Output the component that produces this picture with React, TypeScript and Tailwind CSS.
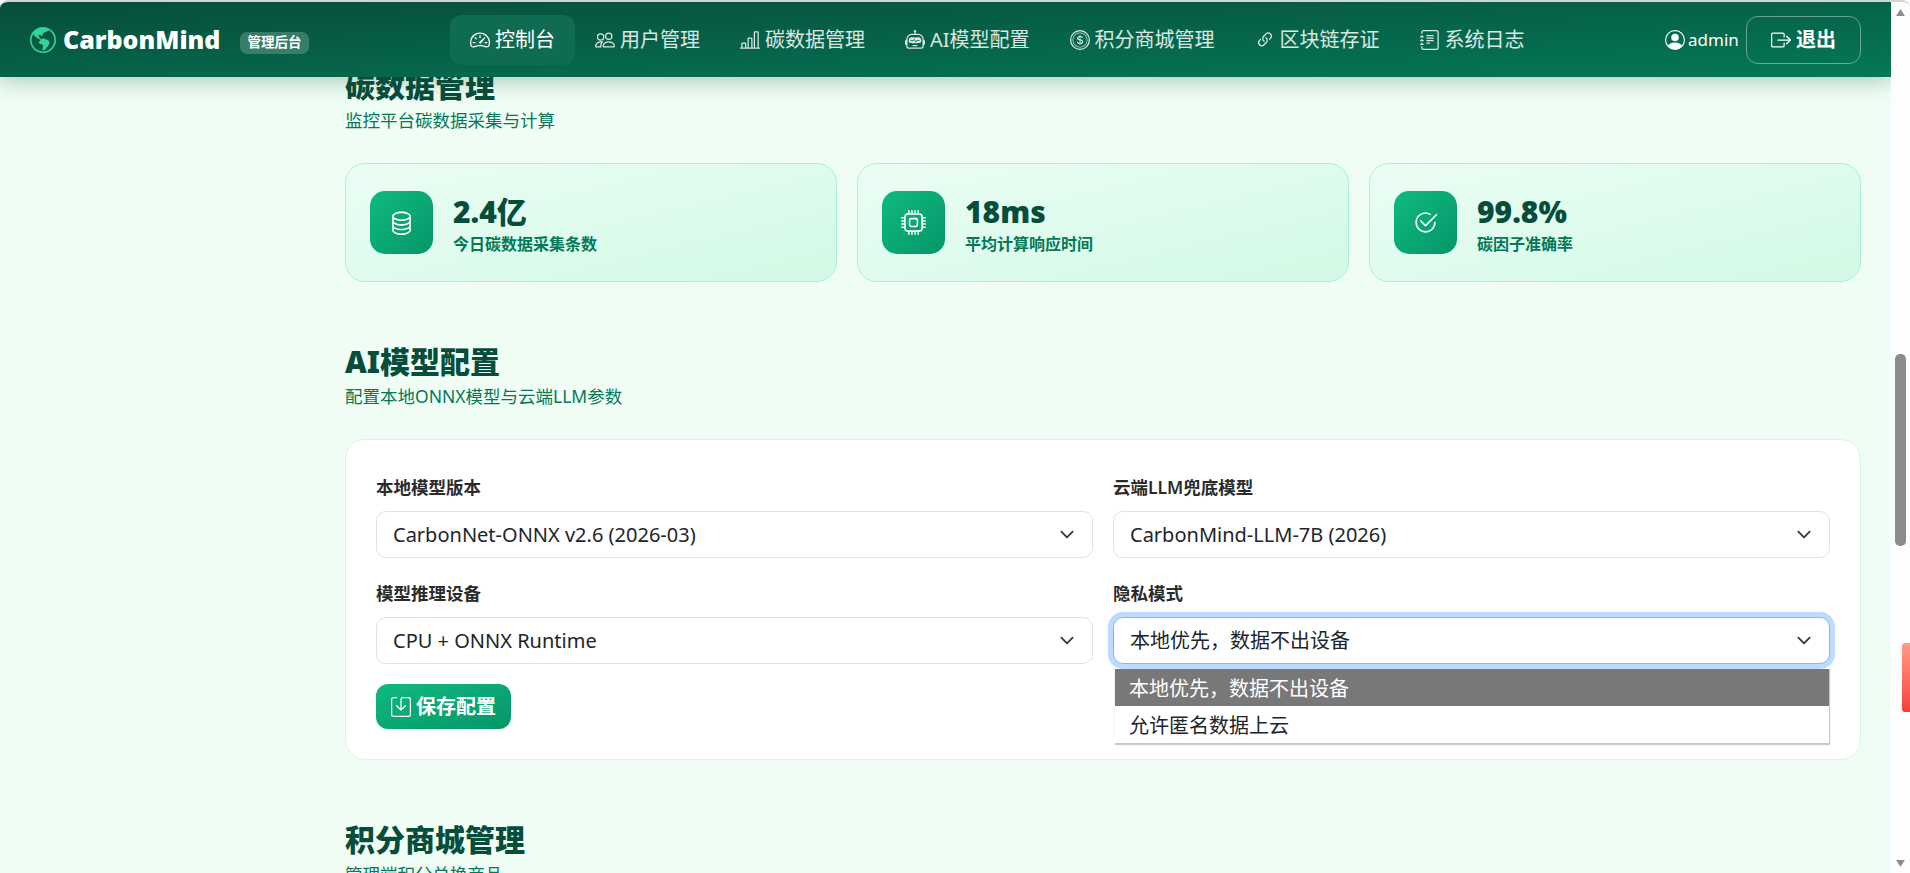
import {
  BsBarChartLine,
  BsBoxArrowRight,
  BsCheck2Circle,
  BsCoin,
  BsCpu,
  BsDatabase,
  BsGlobeAmericas,
  BsJournalText,
  BsLink45Deg,
  BsPeople,
  BsPersonCircle,
  BsRobot,
  BsSave,
  BsSpeedometer2,
} from "react-icons/bs";
import type { IconType } from "react-icons";

const navItems: Array<{ label: string; icon: IconType; active?: boolean }> = [
  { label: "控制台", icon: BsSpeedometer2, active: true },
  { label: "用户管理", icon: BsPeople },
  { label: "碳数据管理", icon: BsBarChartLine },
  { label: "AI模型配置", icon: BsRobot },
  { label: "积分商城管理", icon: BsCoin },
  { label: "区块链存证", icon: BsLink45Deg },
  { label: "系统日志", icon: BsJournalText },
];

const stats: Array<{ value: string; label: string; icon: IconType }> = [
  { value: "2.4亿", label: "今日碳数据采集条数", icon: BsDatabase },
  { value: "18ms", label: "平均计算响应时间", icon: BsCpu },
  { value: "99.8%", label: "碳因子准确率", icon: BsCheck2Circle },
];

const Chevron = () => (
  <svg viewBox="0 0 16 16" className="w-[20px] h-[15px] shrink-0" fill="none" stroke="#343a40" strokeWidth="2" strokeLinecap="round" strokeLinejoin="round">
    <path d="m2 5 6 6 6-6" />
  </svg>
);

const SelectField = ({ label, value, open }: { label: string; value: string; open?: boolean }) => (
  <div>
    <div className="text-[17.5px] leading-[21px] font-semibold text-[#2b2b2b] mb-[13px]">{label}</div>
    <div className="relative">
      <div
        className={`h-[47px] bg-white rounded-[10px] border flex items-center justify-between pl-[16px] pr-[15px] text-[20px] text-[#212529] ${
          open ? "border-[#86b7fe] shadow-[0_0_0_5px_#c2d9fe]" : "border-[#dee2e6]"
        }`}
      >
        <span>{value}</span>
        <Chevron />
      </div>
      {open && (
        <div className="absolute top-[52px] left-[2px] right-0 z-20 bg-white text-[20px] text-[#212529] border-r border-b border-[#c8c8c8] shadow-[0_1px_1px_rgba(0,0,0,0.2)]">
          <div className="h-[37px] flex items-center pl-[14px] pt-[2px] bg-[#787878] text-white">本地优先，数据不出设备</div>
          <div className="h-[37px] flex items-center pl-[14px] pt-[2px]">允许匿名数据上云</div>
        </div>
      )}
    </div>
  </div>
);

const SectionTitle = ({ title, sub }: { title: string; sub: string }) => (
  <div>
    <h2 className="text-[30px] leading-[36px] font-black text-[#064e3b]">{title}</h2>
    <p className="mt-[6px] text-[17.5px] leading-[21px] text-[#047857]">{sub}</p>
  </div>
);

export default function App() {
  return (
    <div className="h-[873px] w-full flex overflow-hidden bg-white rounded-t-lg border-t-2 border-[#d4d4d4] [font-family:'Noto_Sans','Noto_Sans_CJK_SC',sans-serif] relative">
      <div className="flex-1 min-w-0 flex flex-col bg-[#f0fdf4] overflow-hidden">
        {/* Navbar */}
        <nav className="relative z-10 h-[75px] shrink-0 flex items-center px-[30px] bg-gradient-to-br from-[#064e3b] to-[#047857] shadow-[0_4px_20px_rgba(6,78,59,0.3)]">
          <BsGlobeAmericas className="w-[26px] h-[26px] text-[#34d399] shrink-0" />
          <span className="ml-[7px] w-[158px] text-[25px] font-black text-white leading-none">CarbonMind</span>
          <span className="ml-[19px] mt-[6px] h-[22px] w-[69px] rounded-[7px] bg-white/20 text-white text-[13.5px] font-bold flex items-center justify-center">管理后台</span>

          <div className="ml-[141px] flex items-center">
            {navItems.map((item) => (
              <div
                key={item.label}
                className={`h-[50px] px-[20px] flex items-center gap-[5px] rounded-[12px] text-[20px] ${
                  item.active ? "bg-[#0f6b52] text-white" : "text-white/85"
                }`}
              >
                <item.icon className="w-[20px] h-[20px] shrink-0" />
                <span>{item.label}</span>
              </div>
            ))}
          </div>

          <div className="ml-auto flex items-center">
            <BsPersonCircle className="w-[20px] h-[20px] text-white" />
            <span className="ml-[3px] w-[48px] text-[17px] text-white">admin</span>
            <button className="ml-[10px] w-[115px] h-[48px] rounded-[12px] border border-white/40 flex items-center justify-center gap-[5px] text-white text-[20px] font-bold">
              <BsBoxArrowRight className="w-[20px] h-[20px]" />
              退出
            </button>
          </div>
        </nav>

        {/* Main content, scrolled so the first heading sits under the navbar */}
        <main className="-mt-[9px] pl-[345px] pr-[30px]">
          <SectionTitle title="碳数据管理" sub="监控平台碳数据采集与计算" />

          <div className="mt-[32px] grid grid-cols-3 gap-[20px]">
            {stats.map((s) => (
              <div
                key={s.label}
                className="h-[119px] rounded-[20px] border border-[#a7f3d0] bg-gradient-to-br from-[#ecfdf5] to-[#d1fae5] flex items-center pl-[24px]"
              >
                <div className="w-[63px] h-[63px] rounded-[15px] bg-gradient-to-br from-[#10b981] to-[#059669] flex items-center justify-center">
                  <s.icon className="w-[25px] h-[25px] text-white" />
                </div>
                <div className="ml-[20px] mt-[3px]">
                  <div className="text-[30px] leading-[36px] font-black text-[#064e3b]">{s.value}</div>
                  <div className="mt-[4px] text-[16px] leading-[20px] font-semibold text-[#047857]">{s.label}</div>
                </div>
              </div>
            ))}
          </div>

          <div className="mt-[62px]">
            <SectionTitle title="AI模型配置" sub="配置本地ONNX模型与云端LLM参数" />
          </div>

          <div className="mt-[32px] h-[321px] rounded-[20px] border border-[#d1fae5] bg-white px-[30px] pt-[37px]">
            <div className="grid grid-cols-2 gap-x-[20px] gap-y-[25px]">
              <SelectField label="本地模型版本" value="CarbonNet-ONNX v2.6 (2026-03)" />
              <SelectField label="云端LLM兜底模型" value="CarbonMind-LLM-7B (2026)" />
              <SelectField label="模型推理设备" value="CPU + ONNX Runtime" />
              <SelectField label="隐私模式" value="本地优先，数据不出设备" open />
            </div>
            <button className="mt-[20px] w-[135px] h-[45px] rounded-[12px] bg-gradient-to-br from-[#10b981] to-[#059669] flex items-center justify-center gap-[5px] text-white text-[20px] font-bold">
              <BsSave className="w-[20px] h-[20px]" />
              保存配置
            </button>
          </div>

          <div className="mt-[62px]">
            <SectionTitle title="积分商城管理" sub="管理端积分兑换商品" />
          </div>
        </main>
      </div>

      {/* Scrollbar */}
      <div className="w-[19px] shrink-0 bg-[#fdfdfd] flex flex-col items-center pt-[7px]">
        <svg viewBox="0 0 10 8" className="w-[9px] h-[7px]" fill="#8c8c8c"><path d="M5 0 10 8H0z" /></svg>
        <div className="mt-[338px] w-[11px] h-[192px] rounded-[5px] bg-[#8c8c8c]" />
        <svg viewBox="0 0 10 8" className="mt-auto mb-[6px] w-[9px] h-[7px]" fill="#8c8c8c"><path d="M0 0H10L5 8z" /></svg>
      </div>

      {/* Browser extension tab on the page edge */}
      <div className="absolute right-0 top-[641px] w-[8px] h-[69px] rounded-l-[3px] bg-gradient-to-b from-[#ff9a85] to-[#f83a3a]" />
    </div>
  );
}
